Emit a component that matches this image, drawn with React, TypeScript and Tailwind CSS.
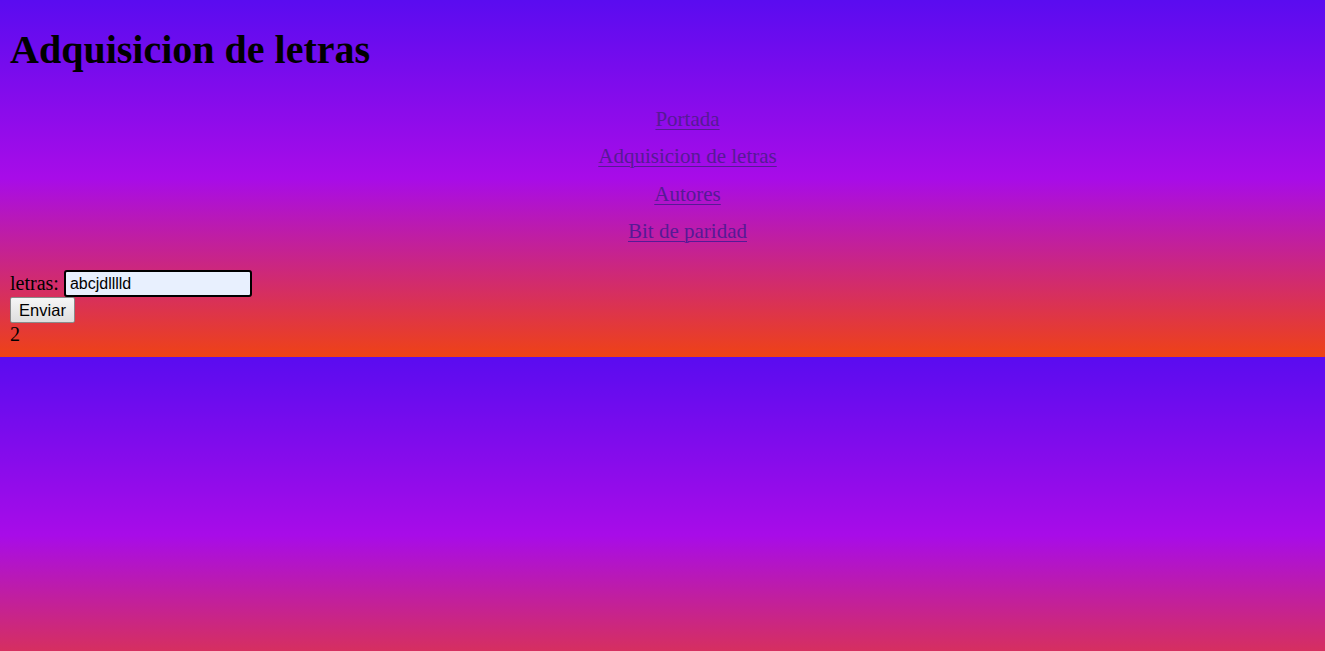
export default function App() {
  const links = ['Portada', 'Adquisicion de letras', 'Autores', 'Bit de paridad'];

  return (
    <div className="min-h-screen bg-[linear-gradient(#5a0cf0,#a80ce8,#ef4215)] bg-[length:100%_357px] bg-repeat font-['Liberation_Serif',serif] text-[20px] text-black">
      <div className="px-[10px] pt-[27px]">
        {/* titulo */}
        <h1 className="h-[46px] text-[40px] leading-[46px] font-bold">Adquisicion de letras</h1>

        {/* menu */}
        <nav className="mt-[27px] flex flex-col items-center pl-[50px]">
          {links.map((link) => (
            <div key={link} className="flex h-[37.5px] items-center">
              <a
                href="#"
                className="text-[21px] leading-[24px] text-[#561a95] underline decoration-1 underline-offset-[3px]"
              >
                {link}
              </a>
            </div>
          ))}
        </nav>

        {/* formulario */}
        <form className="mt-[20px] flex flex-col items-start" onSubmit={(e) => e.preventDefault()}>
          <div className="flex h-[27px] items-center">
            <label htmlFor="letras" className="leading-[23px]">letras:</label>
            <input
              id="letras"
              type="text"
              defaultValue="abcjdlllld"
              className="ml-[5px] h-[27px] w-[188px] rounded-[3px] border-2 border-black bg-[#e8f0fe] px-[4px] font-['Liberation_Sans',sans-serif] text-[16px] text-black outline-none"
            />
          </div>
          <button
            type="submit"
            className="h-[26px] w-[65px] rounded-[2px] border border-[#8a8a8a] bg-[linear-gradient(#f6f6f6,#dedede)] font-['Liberation_Sans',sans-serif] text-[16.5px] leading-none text-black"
          >
            Enviar
          </button>
          <div className="leading-[23px]">2</div>
        </form>
      </div>
    </div>
  );
}
